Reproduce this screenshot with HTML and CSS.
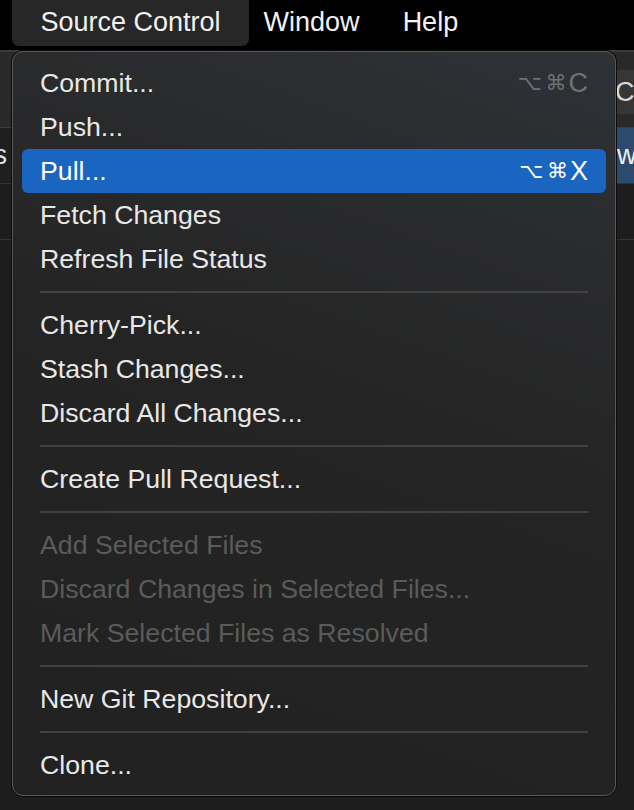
FILE: index.html
```html
<!DOCTYPE html>
<html lang="en">
<head>
<meta charset="utf-8">
<title>Source Control menu</title>
<link rel="stylesheet" href="styles.css">
</head>
<body>
<div class="screen">
  <div class="menubar">
    <div class="mb-item active">Source Control</div>
    <div class="mb-item">Window</div>
    <div class="mb-item">Help</div>
  </div>
  <div class="window">
    <div class="toolbar">
      <div class="spacer"></div>
      <div class="tb-field">Cl</div>
    </div>
    <div class="list-row first">
      <div class="cell-left"><span>s</span></div>
      <div class="spacer"></div>
      <div class="cell-sel">wl</div>
    </div>
    <div class="list-row"></div>
    <div class="list-row last"></div>
  </div>

  <div class="menu">
    <div class="item"><span>Commit...</span><span class="shortcut"><span class="key opt">⌥</span><span class="key cmd">⌘</span><span class="letter">C</span></span></div>
    <div class="item"><span>Push...</span></div>
    <div class="item selected"><span>Pull...</span><span class="shortcut"><span class="key opt">⌥</span><span class="key cmd">⌘</span><span class="letter">X</span></span></div>
    <div class="item"><span>Fetch Changes</span></div>
    <div class="item"><span>Refresh File Status</span></div>
    <div class="sep"></div>
    <div class="item"><span>Cherry-Pick...</span></div>
    <div class="item"><span>Stash Changes...</span></div>
    <div class="item"><span>Discard All Changes...</span></div>
    <div class="sep"></div>
    <div class="item"><span>Create Pull Request...</span></div>
    <div class="sep"></div>
    <div class="item disabled"><span>Add Selected Files</span></div>
    <div class="item disabled"><span>Discard Changes in Selected Files...</span></div>
    <div class="item disabled"><span>Mark Selected Files as Resolved</span></div>
    <div class="sep"></div>
    <div class="item"><span>New Git Repository...</span></div>
    <div class="sep"></div>
    <div class="item"><span>Clone...</span></div>
  </div>
</div>
</body>
</html>
```

FILE: styles.css
```css
* { box-sizing: border-box; }

html, body {
  margin: 0;
  padding: 0;
  background: #1b1b1b;
}

body {
  font-family: "Liberation Sans", Arial, sans-serif;
  -webkit-font-smoothing: antialiased;
}

.screen {
  position: relative;
  width: 634px;
  height: 810px;
  overflow: hidden;
  display: flex;
  flex-direction: column;
  background: #1b1b1b;
}

/* ---------- menu bar ---------- */
.menubar {
  height: 50px;
  flex: none;
  background: #000;
  display: flex;
  align-items: flex-start;
  padding-left: 19px;
}

.mb-item {
  height: 46px;
  line-height: 45px;
  padding: 0 21.5px;
  font-size: 27px;
  color: #f2f2f2;
  white-space: nowrap;
}

.mb-item.active {
  padding: 0 28.5px;
  margin: 0 -7px;
  background: #272727;
  border-radius: 0 0 7px 7px;
}

/* ---------- background window ---------- */
.window {
  flex: 1;
  display: flex;
  flex-direction: column;
}

.toolbar {
  height: 77px;
  flex: none;
  background: #292929;
  border-top: 2px solid #3b3b3b;
  display: flex;
  align-items: center;
}

.spacer { flex: 1; }

.tb-field {
  width: 22px;
  height: 44px;
  margin-top: 4px;
  background: #363636;
  color: #d8d8d8;
  font-size: 27px;
  line-height: 44px;
  padding-left: 3px;
  overflow: hidden;
  white-space: nowrap;
}

.list-row {
  height: 56px;
  flex: none;
  border-top: 1px solid #343434;
  background: #1d1d1d;
  display: flex;
  align-items: stretch;
}

.list-row.first { background: #1f1f1f; border-top-color: #3c3c3c; }
.list-row.last { flex: 1; }

.cell-left {
  width: 7px;
  overflow: hidden;
  display: flex;
  justify-content: flex-end;
  align-items: center;
  color: #e0e0e0;
  font-size: 27px;
  white-space: nowrap;
}

.cell-sel {
  width: 24px;
  background: #2c4a6e;
  color: #eeeeee;
  font-size: 27px;
  line-height: 54px;
  padding-left: 7px;
  overflow: hidden;
  white-space: nowrap;
}

/* ---------- dropdown menu ---------- */
.menu {
  position: absolute;
  left: 12px;
  top: 51px;
  width: 604px;
  height: 745px;
  border: 1px solid #575757;
  border-radius: 11px;
  background: linear-gradient(200deg, #2e3237 0%, #2a2b2d 22%, #242424 48%, #212121 100%);
  padding: 9px 9px 8px;
  display: flex;
  flex-direction: column;
  box-shadow: 0 0 0 1px #0c0c0c;
}

.item {
  height: 44px;
  flex: none;
  display: flex;
  align-items: center;
  justify-content: space-between;
  padding: 0 18px;
  border-radius: 6px;
  font-size: 26.7px;
  color: #e8e8e8;
  white-space: nowrap;
}

.item.selected {
  background: #1a65c0;
  color: #ffffff;
}

.item.disabled {
  color: #5b5b5b;
}

.shortcut {
  display: flex;
  align-items: center;
  color: #6f7175;
}

.item.selected .shortcut { color: #ffffff; }

.key {
  display: inline-block;
  font-family: "DejaVu Sans", sans-serif;
  font-size: 21px;
  text-align: left;
}

.key.opt { width: 28px; }
.key.cmd { width: 23px; }

.letter {
  font-size: 27px;
}

.sep {
  height: 22px;
  flex: none;
  padding: 10px 18px;
}

.sep::before {
  content: "";
  display: block;
  height: 2px;
  background: #414141;
}
```
